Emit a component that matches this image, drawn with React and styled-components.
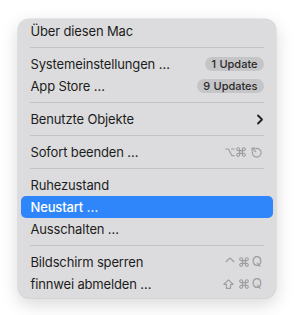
import React from 'react';
import styled, { createGlobalStyle } from 'styled-components';

const GlobalStyle = createGlobalStyle`
  html, body {
    margin: 0;
    padding: 0;
    background: #ffffff;
  }
  body {
    font-family: Inter, "Noto Sans", "Liberation Sans", sans-serif;
    -webkit-font-smoothing: antialiased;
  }
`;

const Page = styled.div`
  width: 294px;
  height: 315px;
  padding-top: 19px;
  box-sizing: border-box;
`;

const Menu = styled.div`
  width: 258px;
  margin-left: 18px;
  padding: 1px 3px 3px;
  box-sizing: border-box;
  background: #dcdcde;
  border-radius: 11px;
  box-shadow: 0 6px 18px rgba(0, 0, 0, 0.16), 0 0 0 0.5px rgba(0, 0, 0, 0.12);
`;

const Row = styled.div`
  height: 22px;
  display: flex;
  align-items: center;
  justify-content: space-between;
  padding: 0 9px 0 9.5px;
  border-radius: 5px;
  font-size: 13px;
  letter-spacing: -0.15px;
  color: ${(p) => (p.$active ? '#ffffff' : '#1c1c1c')};
  background: ${(p) => (p.$active ? '#2f86fa' : 'transparent')};
  font-weight: ${(p) => (p.$active ? 500 : 400)};
`;

const Separator = styled.div`
  height: 11px;
  display: flex;
  align-items: center;
  padding: 0 9px;

  &::after {
    content: '';
    flex: 1;
    height: 1px;
    background: #c3c3c6;
  }
`;

const Badge = styled.span`
  height: 14px;
  padding: 0 6.5px;
  border-radius: 7px;
  background: #c5c5c8;
  color: #2a2a2a;
  font-size: 11px;
  font-weight: 500;
  letter-spacing: 0;
  word-spacing: 0.5px;
  line-height: 14px;
  display: inline-flex;
  align-items: center;
  white-space: pre;
`;

const Shortcut = styled.span`
  display: inline-flex;
  align-items: center;
  margin-right: 2px;
  color: #9e9ea1;
`;

const KeyLetter = styled.span`
  margin-left: 3px;
  font-size: 13.5px;
  line-height: 1;
  color: #9e9ea1;
`;

const KeyIcon = styled.svg`
  display: block;
  flex-shrink: 0;
  margin-left: ${(p) => p.$space ?? 3}px;
`;

const stroke = { fill: 'none', stroke: '#9e9ea1', strokeWidth: 1.15, strokeLinejoin: 'round' };

const OptionKey = ({ space }) => (
  <KeyIcon $space={space} width="10" height="10" viewBox="0 0 10 10">
    <path d="M0.3 2 H3.4 L6.8 8.6 H9.7 M6 2 H9.7" {...stroke} />
  </KeyIcon>
);

const CommandKey = ({ space }) => (
  <KeyIcon $space={space} width="10" height="10" viewBox="0 0 10 10">
    <path
      d="M3.6 3.6 V2.2 A1.45 1.45 0 1 0 2.2 3.6 H7.8 A1.45 1.45 0 1 0 6.4 2.2 V7.8 A1.45 1.45 0 1 0 7.8 6.4 H2.2 A1.45 1.45 0 1 0 3.6 7.8 Z"
      {...stroke}
    />
  </KeyIcon>
);

const ControlKey = ({ space }) => (
  <KeyIcon $space={space} width="10" height="10" viewBox="0 0 10 10">
    <path d="M0.8 5 L5 1 L9.2 5" {...stroke} />
  </KeyIcon>
);

const ShiftKey = ({ space }) => (
  <KeyIcon $space={space} width="11" height="10" viewBox="0 0 11 10">
    <path d="M5.5 0.8 L10.2 5.4 H7.6 V9.3 H3.4 V5.4 H0.8 Z" {...stroke} />
  </KeyIcon>
);

const EscapeKey = ({ space }) => (
  <KeyIcon $space={space} width="11" height="11" viewBox="0 0 11 11">
    <path d="M4.3 1.6 A4.4 4.4 0 1 1 1.6 4.3" {...stroke} />
    <path d="M1.4 1.4 L5 5" {...stroke} />
    <path d="M1.1 4 L1.1 1.1 L4 1.1" {...stroke} />
  </KeyIcon>
);

const Chevron = () => (
  <svg width="8" height="11" viewBox="0 0 8 11">
    <path d="M2 1.5 L6 5.5 L2 9.5" fill="none" stroke="#1f1f1f" strokeWidth="1.8" strokeLinecap="round" strokeLinejoin="round" />
  </svg>
);

export default function App() {
  return (
    <Page>
      <GlobalStyle />
      <Menu>
        <Row>Über diesen Mac</Row>
        <Separator />
        <Row>
          Systemeinstellungen …<Badge>1 Update</Badge>
        </Row>
        <Row>
          App Store …<Badge>9 Updates</Badge>
        </Row>
        <Separator />
        <Row>
          Benutzte Objekte
          <Chevron />
        </Row>
        <Separator />
        <Row>
          Sofort beenden …
          <Shortcut>
            <OptionKey space={0} />
            <CommandKey space={1} />
            <EscapeKey space={5} />
          </Shortcut>
        </Row>
        <Separator />
        <Row>Ruhezustand</Row>
        <Row $active>Neustart …</Row>
        <Row>Ausschalten …</Row>
        <Separator />
        <Row>
          Bildschirm sperren
          <Shortcut>
            <ControlKey space={0} />
            <CommandKey space={4} />
            <KeyLetter>Q</KeyLetter>
          </Shortcut>
        </Row>
        <Row>
          finnwei abmelden …
          <Shortcut>
            <ShiftKey space={0} />
            <CommandKey space={5} />
            <KeyLetter>Q</KeyLetter>
          </Shortcut>
        </Row>
      </Menu>
    </Page>
  );
}
